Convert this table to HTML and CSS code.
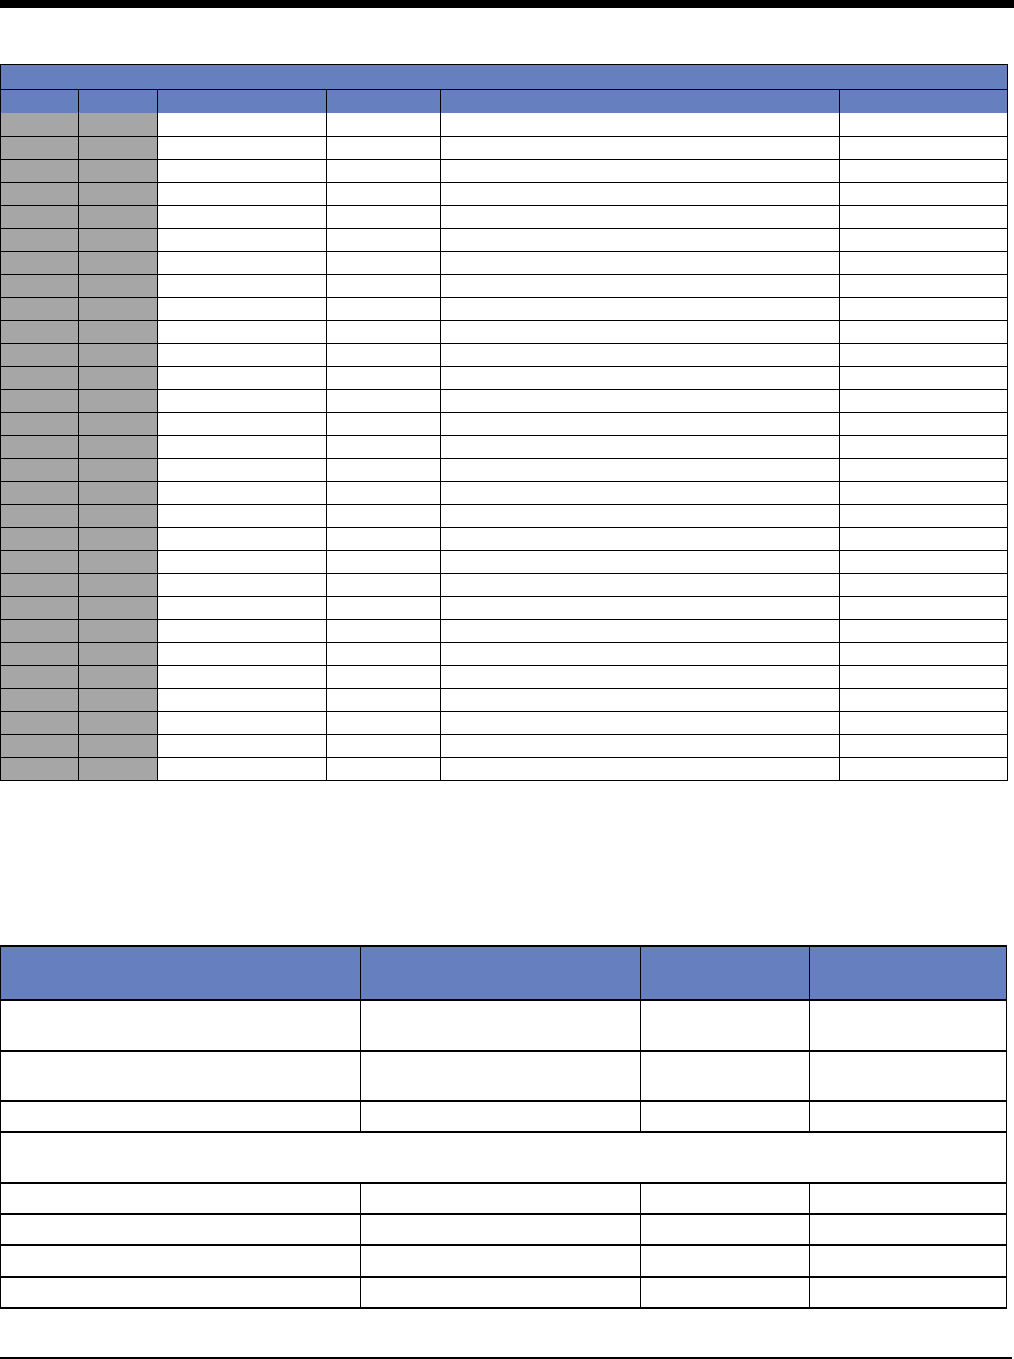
FILE: index.html
```html
<!DOCTYPE html>
<html>
<head>
<meta charset="utf-8">
<link rel="stylesheet" href="styles.css">
</head>
<body>
<div class="topbar"></div>
<table class="t1">
  <colgroup>
    <col class="c1"><col class="c2"><col class="c3"><col class="c4"><col class="c5"><col class="c6">
  </colgroup>
  <thead>
    <tr class="title"><th colspan="6"></th></tr>
    <tr class="head"><th></th><th></th><th></th><th></th><th></th><th></th></tr>
  </thead>
  <tbody id="rows1">
  </tbody>
</table>

<table class="t2">
  <colgroup>
    <col class="d1"><col class="d2"><col class="d3"><col class="d4">
  </colgroup>
  <thead>
    <tr class="h2"><th></th><th></th><th></th><th></th></tr>
  </thead>
  <tbody>
    <tr class="r51"><td></td><td></td><td></td><td></td></tr>
    <tr class="r50"><td></td><td></td><td></td><td></td></tr>
    <tr class="r31"><td></td><td></td><td></td><td></td></tr>
    <tr class="r51"><td colspan="4"></td></tr>
    <tr class="r31"><td></td><td></td><td></td><td></td></tr>
    <tr class="r31"><td></td><td></td><td></td><td></td></tr>
    <tr class="r32"><td></td><td></td><td></td><td></td></tr>
    <tr class="r31"><td></td><td></td><td></td><td></td></tr>
  </tbody>
</table>
<div class="footline"></div>
<script>
  var tb = document.getElementById('rows1');
  for (var i = 0; i < 29; i++) {
    var tr = document.createElement('tr');
    tr.className = 'data';
    for (var j = 0; j < 6; j++) {
      var td = document.createElement('td');
      if (j < 2) td.className = 'grey';
      tr.appendChild(td);
    }
    tb.appendChild(tr);
  }
</script>
</body>
</html>
```

FILE: styles.css
```css
html, body {
  margin: 0;
  padding: 0;
  background: #fff;
  font-family: "Liberation Sans", Arial, sans-serif;
}
.topbar {
  height: 8px;
  background: #000;
  width: 1014px;
}
table {
  border-collapse: collapse;
  table-layout: fixed;
}
td, th {
  padding: 0;
}
.t1 {
  margin-top: 56px;
  width: 1008px;
  border: 1px solid #000;
}
.c1 { width: 78px; }
.c2 { width: 79px; }
.c3 { width: 169px; }
.c4 { width: 114px; }
.c5 { width: 399px; }
.c6 { width: 168px; }
.t1 th {
  background: #667fbf;
}
.t1 .title th {
  height: 24px;
  border-bottom: 1px solid #000;
}
.t1 .head th {
  height: 23px;
  border-left: 1px solid #000;
  border-right: 1px solid #000;
  border-bottom: 0;
}
.t1 .data td {
  height: 22px;
  border: 1px solid #000;
}
.t1 .data:first-child td {
  border-top: 0;
  height: 23px;
}
.t1 td.grey {
  background: #a6a6a6;
}
.t2 {
  margin-top: 164px;
  width: 1007px;
  border: 2px solid #000;
  border-left-width: 1px;
  border-right-width: 1px;
}
.d1 { width: 360px; }
.d2 { width: 280px; }
.d3 { width: 169px; }
.d4 { width: 197px; }
.t2 th {
  background: #667fbf;
  height: 52px;
  border-left: 1px solid #000;
  border-right: 1px solid #000;
  border-bottom: 2px solid #000;
}
.t2 td {
  border-left: 1px solid #000;
  border-right: 1px solid #000;
  border-bottom: 2px solid #000;
}
.t2 .r51 td { height: 49px; }
.t2 .r50 td { height: 48px; }
.t2 .r31 td { height: 29px; }
.t2 .r32 td { height: 30px; }
.footline {
  margin-top: 48px;
  width: 1012px;
  height: 2px;
  background: #000;
}
```
